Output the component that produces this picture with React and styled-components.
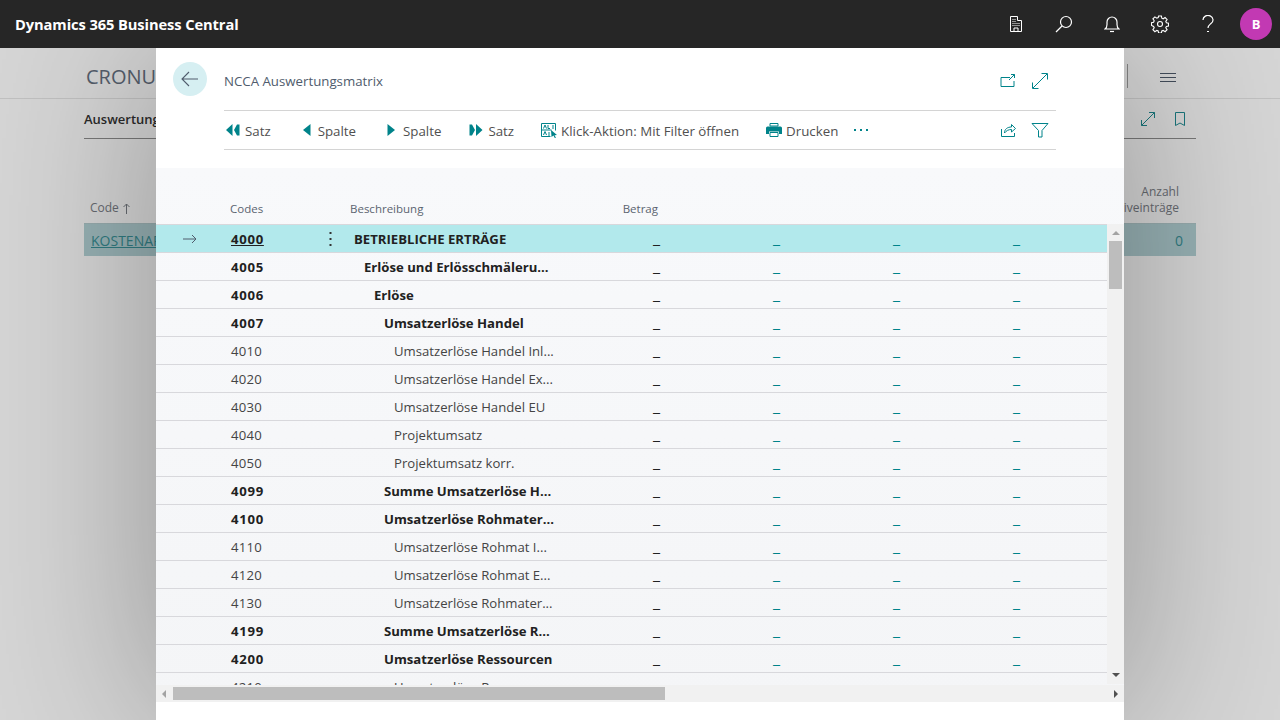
import React from 'react'
import styled, { createGlobalStyle } from 'styled-components'

const GlobalStyle = createGlobalStyle`
  html, body { margin: 0; padding: 0; height: 100%; overflow: hidden; }
  body { font-family: "Open Sans", "Noto Sans", "Liberation Sans", sans-serif; background: #fff; color: #212121; }
  * { box-sizing: border-box; }
`

const Shell = styled.div`
  position: relative;
  width: 1280px;
  height: 720px;
  overflow: hidden;
  display: flex;
  flex-direction: column;
`

const TopBar = styled.header`
  position: relative;
  z-index: 3;
  height: 48px;
  flex: none;
  background: #262626;
  display: flex;
  align-items: center;
  padding: 0 8px 0 15px;
`

const Brand = styled.div`
  color: #fff;
  font-size: 14.7px;
  font-weight: 700;
  flex: 1;
  letter-spacing: -0.1px;
`

const BarIcon = styled.span`
  width: 48px;
  height: 48px;
  display: flex;
  align-items: center;
  justify-content: center;
  color: #fff;
`

const Avatar = styled.div`
  width: 32px;
  height: 32px;
  margin-left: 8px;
  border-radius: 50%;
  background: #c239b3;
  color: #fff;
  font-size: 13px;
  font-weight: 700;
  display: flex;
  align-items: center;
  justify-content: center;
`

/* page behind the dialog */
const Page = styled.div`
  flex: 1;
  background: #fff;
`

const PageHead = styled.div`
  height: 51px;
  padding: 6px 104px 0 86px;
  border-bottom: 1px solid #e6e6e6;
  display: flex;
  align-items: center;
  justify-content: space-between;
`

const PageTitle = styled.div`
  font-size: 20px;
  color: #667181;
`

const HeadTools = styled.div`
  display: flex;
  align-items: center;
  color: #505c6d;
  height: 24px;
  border-left: 1px solid #a0a0a0;
  padding-left: 32px;
  svg { margin-top: 3px; }
`

const PageBody = styled.div`
  padding: 0 84px;
`

const PageTabs = styled.div`
  height: 40px;
  border-bottom: 1px solid #8f8f8f;
  display: flex;
  align-items: center;
  justify-content: space-between;
  font-size: 13px;
  font-weight: 600;
  color: #333;
  padding-right: 8px;
`

const PageTools = styled.div`
  display: flex;
  gap: 16px;
  color: #1f8d94;
`

const PageHeader = styled.div`
  height: 84px;
  display: flex;
  justify-content: space-between;
  align-items: flex-end;
  padding: 0 17px 7px 6px;
  font-size: 12px;
  color: #7b8087;
  line-height: 16px;
  text-align: right;
`

const SortMark = styled.span`
  display: flex;
  align-items: center;
  gap: 4px;
`

const PageRow = styled.div`
  height: 33px;
  background: #b6d5d8;
  border-top: 1px solid #b5cdd0;
  display: flex;
  align-items: center;
  justify-content: space-between;
  padding: 0 13px 0 7px;
  font-size: 14px;
  color: #3a939a;
`

const PageLink = styled.span`
  text-decoration: underline;
`

const Scrim = styled.div`
  position: absolute;
  inset: 48px 0 0 0;
  z-index: 1;
  background: rgba(0, 0, 0, 0.16);
`

/* dialog */
const Dialog = styled.section`
  position: absolute;
  z-index: 2;
  left: 156px;
  top: 48px;
  width: 968px;
  height: 672px;
  background: #fff;
  box-shadow: 0 0 170px rgba(0, 0, 0, 0.32);
  display: flex;
  flex-direction: column;
`

const DialogHead = styled.div`
  height: 120px;
  flex: none;
  display: grid;
  grid-template-columns: 68px 832px;
  grid-template-rows: 62px 40px;
`

const BackCell = styled.div`
  padding: 14px 0 0 17px;
`

const BackButton = styled.div`
  width: 34px;
  height: 34px;
  border-radius: 50%;
  background: #d6eff2;
  display: flex;
  align-items: center;
  justify-content: center;
  color: #505c6d;
`

const TitleRow = styled.div`
  display: flex;
  align-items: center;
  justify-content: space-between;
  padding: 4px 7px 0 0;
  font-size: 13.25px;
  color: #505c6d;
`

const IconGroup = styled.div`
  display: flex;
  align-items: center;
  gap: 15px;
  color: #00838a;
  line-height: 0;
`

const ToolBar = styled.div`
  grid-column: 2;
  border-top: 1px solid #d4d4d4;
  border-bottom: 1px solid #d4d4d4;
  display: flex;
  align-items: center;
  justify-content: space-between;
  padding-right: 7px;
`

const Actions = styled.div`
  display: flex;
  align-items: center;
  margin-left: 2px;
`

const Action = styled.div`
  display: flex;
  align-items: center;
  gap: ${(p) => p.$gap || 5}px;
  font-size: 13.3px;
  line-height: 18px;
  padding-top: 1px;
  margin-right: ${(p) => p.$space || 0}px;
  color: #505050;
  white-space: nowrap;
  svg { color: #00838a; flex: none; margin-top: -1px; }
`

const GridArea = styled.div`
  height: 534px;
  flex: none;
  background: linear-gradient(#f8f9fb, #f4f5f7);
  position: relative;
  display: flex;
  flex-direction: column;
`

const ColumnHead = styled.div`
  height: 57px;
  flex: none;
  display: grid;
  grid-template-columns: 74px 120px 208px 100px;
  align-items: end;
  padding-bottom: 8px;
  border-bottom: 1px solid #d8d8dc;
  margin-right: 17px;
  font-size: 11.5px;
  color: #5b6470;
`

const HeadCell = styled.div`
  grid-column: ${(p) => p.$col};
  text-align: ${(p) => p.$right ? 'right' : 'left'};
`

const Rows = styled.div`
  height: 460px;
  flex: none;
  margin-right: 17px;
  overflow: hidden;
`

const Row = styled.div`
  height: 28px;
  display: grid;
  grid-template-columns: 70px 90px 29px 211px 104px 120px 120px 120px;
  align-items: center;
  background: ${(p) => p.$active ? '#b2e9ec' : 'transparent'};
  border-bottom: 1px solid #d8d8dc;
  font-size: 13.15px;
  font-weight: ${(p) => p.$bold ? 700 : 400};
  color: ${(p) => p.$bold ? '#212121' : '#444'};
`

const Marker = styled.div`
  padding-left: 27px;
  line-height: 0;
  color: #505c6d;
`

const Code = styled.div`
  padding-left: 5px;
  letter-spacing: ${(p) => p.$bold ? '0.7px' : '0.2px'};
  text-decoration: ${(p) => p.$link ? 'underline' : 'none'};
`

const Dots = styled.div`
  display: flex;
  justify-content: center;
  color: #333;
  line-height: 0;
`

const Desc = styled.div`
  padding-left: ${(p) => 9 + p.$level * 10}px;
  white-space: nowrap;
`

const Amount = styled.div`
  text-align: right;
  font-weight: 400;
  font-size: 16px;
  line-height: 20px;
  margin-top: -2px;
  color: ${(p) => p.$dark ? '#212121' : '#00838a'};
`

const VScroll = styled.div`
  position: absolute;
  top: 56px;
  right: 0;
  width: 17px;
  height: 460px;
  background: #f1f1f1;
  display: flex;
  flex-direction: column;
  align-items: center;
  justify-content: space-between;
`

const VThumb = styled.div`
  position: absolute;
  top: 17px;
  left: 2px;
  width: 13px;
  height: 48px;
  background: #bdbdbd;
`

const HScroll = styled.div`
  height: 17px;
  flex: none;
  background: #f1f1f1;
  position: relative;
  z-index: 1;
  display: flex;
  align-items: center;
  justify-content: space-between;
  padding: 0 6px;
`

const HThumb = styled.div`
  position: absolute;
  left: 17px;
  top: 2px;
  width: 492px;
  height: 13px;
  background: #bdbdbd;
`

const Arrow = styled.span`
  width: 0;
  height: 0;
  border-style: solid;
  ${(p) => p.$dir === 'up' && 'border-width: 0 4px 4px; border-color: transparent transparent #a3a3a3; margin-top: 7px;'}
  ${(p) => p.$dir === 'down' && 'border-width: 4px 4px 0; border-color: #505050 transparent transparent; margin-bottom: 7px;'}
  ${(p) => p.$dir === 'left' && 'border-width: 4px 4px 4px 0; border-color: transparent #a3a3a3 transparent transparent;'}
  ${(p) => p.$dir === 'right' && 'border-width: 4px 0 4px 4px; border-color: transparent transparent transparent #505050;'}
`

const Line = ({ w = 16, children, vb = '0 0 16 16' }) => (
  <svg width={w} height={w} viewBox={vb} fill="none" stroke="currentColor" strokeWidth="1">
    {children}
  </svg>
)

const rows = [
  ['4000', 'BETRIEBLICHE ERTRÄGE', 0, true],
  ['4005', 'Erlöse und Erlösschmäleru...', 1, true],
  ['4006', 'Erlöse', 2, true],
  ['4007', 'Umsatzerlöse Handel', 3, true],
  ['4010', 'Umsatzerlöse Handel Inl...', 4],
  ['4020', 'Umsatzerlöse Handel Ex...', 4],
  ['4030', 'Umsatzerlöse Handel EU', 4],
  ['4040', 'Projektumsatz', 4],
  ['4050', 'Projektumsatz korr.', 4],
  ['4099', 'Summe Umsatzerlöse H...', 3, true],
  ['4100', 'Umsatzerlöse Rohmater...', 3, true],
  ['4110', 'Umsatzerlöse Rohmat I...', 4],
  ['4120', 'Umsatzerlöse Rohmat E...', 4],
  ['4130', 'Umsatzerlöse Rohmater...', 4],
  ['4199', 'Summe Umsatzerlöse R...', 3, true],
  ['4200', 'Umsatzerlöse Ressourcen', 3, true],
  ['4210', 'Umsatzerlöse Ressourcen', 4],
]

const Triangles = ({ dir, double }) => {
  const left = dir === 'left'
  return (
    <svg width={double ? 14 : 10} height="12" viewBox={double ? '0 0 14 12' : '0 0 10 12'} fill="currentColor" stroke="none">
      {double && left && <path d="M6.500 0v12L0 6zM8 6l3-5.500h2.500v11H11z" />}
      {double && !left && <path d="M7 0v12l6.500-6zM.5.500H3L6 6l-3 5.500H.5z" />}
      {!double && left && <path d="M8.500 0v12L1 6z" />}
      {!double && !left && <path d="M1.500 0v12L9 6z" />}
    </svg>
  )
}

const App = () => (
  <Shell>
    <GlobalStyle />
    <TopBar>
      <Brand>Dynamics 365 Business Central</Brand>
      <BarIcon>
        <svg width="14" height="18" viewBox="0 0 14 18" fill="none" stroke="currentColor">
          <path d="M1.500 16.500v-15h7v4h4v11z" />
          <path d="M5 16.500v-3.500h4v3.500" />
          <path d="M3.500 4.500h1M5.500 4.500h1M3.500 6.500h1M5.500 6.500h1M3.500 8.500h1M5.500 8.500h1M7.500 8.500h1M9.500 8.500h1M3.500 10.500h1M5.500 10.500h1M7.500 10.500h1M9.500 10.500h1" />
        </svg>
      </BarIcon>
      <BarIcon>
        <svg width="18" height="18" viewBox="0 0 18 18" fill="none" stroke="currentColor" strokeWidth="1.200">
          <circle cx="11" cy="7" r="5.500" />
          <path d="M7 11l-6 6" />
        </svg>
      </BarIcon>
      <BarIcon>
        <svg width="16" height="18" viewBox="0 0 16 18" fill="none" stroke="currentColor" strokeWidth="1.200">
          <path d="M1 14c1.600-1 2-2.500 2-4.500V7a5 5 0 0 1 10 0v2.500c0 2 .4 3.500 2 4.500z" />
          <path d="M6 16.500h4" />
        </svg>
      </BarIcon>
      <BarIcon>
        <svg width="18" height="18" viewBox="0 0 18 18" fill="none" stroke="currentColor" strokeWidth="1.100">
          <circle cx="9" cy="9" r="2.500" />
          <path d="M7.600 1h2.800l.4 2.200 1.400.6 1.900-1.300 2 2-1.300 1.900.6 1.400 2.100.4v2.800l-2.100.4-.6 1.400 1.300 1.900-2 2-1.900-1.300-1.400.6-.4 2.100H7.600l-.4-2.100-1.400-.6-1.900 1.300-2-2 1.300-1.900-.6-1.400L.5 10.400V7.600l2.100-.4.6-1.400-1.300-1.900 2-2 1.900 1.300 1.400-.6z" />
        </svg>
      </BarIcon>
      <BarIcon>
        <svg width="14" height="18" viewBox="0 0 14 18" fill="none" stroke="currentColor" strokeWidth="1.200">
          <path d="M2 5a5 4.500 0 1 1 8 3.500C8.500 9.800 7 10.500 7 13" />
          <path d="M6 16.500h2" />
        </svg>
      </BarIcon>
      <Avatar>B</Avatar>
    </TopBar>

    <Page>
      <PageHead>
        <PageTitle>CRONUS</PageTitle>
        <HeadTools>
          <svg width="16" height="11" viewBox="0 0 16 11" fill="none" stroke="currentColor">
            <path d="M0 1.500h16M0 5.500h16M0 9.500h16" />
          </svg>
        </HeadTools>
      </PageHead>
      <PageBody>
        <PageTabs>
          <span>Auswertung</span>
          <PageTools>
            <Line><path d="M1.500 14.500l13-13M9 1.500h5.500V7M1.500 9v5.500H7" /></Line>
            <Line><path d="M3.500 1.500h9v13l-4.500-2.500-4.500 2.500z" /></Line>
          </PageTools>
        </PageTabs>
        <PageHeader>
          <SortMark>
            Code
            <svg width="7" height="11" viewBox="0 0 7 11" fill="none" stroke="currentColor">
              <path d="M3.500 11V1M.5 4l3-3 3 3" />
            </svg>
          </SortMark>
          <span>Anzahl<br />Archiveinträge</span>
        </PageHeader>
        <PageRow>
          <PageLink>KOSTENARTEN</PageLink>
          <span>0</span>
        </PageRow>
      </PageBody>
    </Page>
    <Scrim />

    <Dialog>
      <DialogHead>
        <BackCell>
          <BackButton>
            <svg width="18" height="16" viewBox="0 0 18 16" fill="none" stroke="currentColor" strokeWidth="1.100">
              <path d="M1 8h16M8 1L1 8l7 7" />
            </svg>
          </BackButton>
        </BackCell>
        <TitleRow>
          <span>NCCA Auswertungsmatrix</span>
          <IconGroup>
            <Line><path d="M1 4.500h9M1 4.500v9h13V8M9 7l5.500-5.500M11 1.500h3.500V5" /></Line>
            <svg width="18" height="18" viewBox="0 0 18 18" fill="none" stroke="currentColor"><path d="M2 16L16 2M10.500 1.500h6v6M1.500 10.500v6h6" /></svg>
          </IconGroup>
        </TitleRow>
        <ToolBar>
          <Actions>
            <Action $space={31}><Triangles dir="left" double />Satz</Action>
            <Action $space={30} $gap={6}><Triangles dir="left" />Spalte</Action>
            <Action $space={28} $gap={7}><Triangles dir="right" />Spalte</Action>
            <Action $space={27} $gap={5}><Triangles dir="right" double />Satz</Action>
            <Action $space={27} $gap={4}>
              <svg width="16" height="16" viewBox="0 0 16 16" fill="none" stroke="currentColor">
                <path d="M.5 1.500h14v7M.5 1.500v13h9M.5 8h10" />
                <path d="M2.500 6.500l1.500-3.500 1.500 3.500M7 3v3.500h2M11 4h2M11 6h2M2.500 13l1.500-3.500 1.500 3.500M7 11h2M7 13h2" />
                <path d="M10 8l6 5-2.500.3 1.500 2.400-1.200.3-1.300-2.400L10.500 15z" fill="currentColor" stroke="none" />
              </svg>
              Klick-Aktion: Mit Filter öffnen
            </Action>
            <Action $space={15} $gap={4}>
              <svg width="16" height="14" viewBox="0 0 16 14" fill="currentColor">
                <path d="M1.500 3.500h13a1.500 1.500 0 0 1 1.500 1.500v6h-3V8.500H3V11H0V5a1.500 1.500 0 0 1 1.500-1.500z" />
                <path d="M4 .5h8v2.500H4zM4 9.500h8v4H4z" fill="#fff" stroke="currentColor" />
              </svg>
              Drucken
            </Action>
            <svg width="16" height="4" viewBox="0 0 16 4" fill="#00838a" stroke="none">
              <rect x="1" y="1" width="2" height="2" />
              <rect x="7" y="1" width="2" height="2" />
              <rect x="13" y="1" width="2" height="2" />
            </svg>
          </Actions>
          <IconGroup>
            <Line><path d="M1.500 7v7.500h13V11" /><path d="M4.500 11c0-4 3-6 7-6V2.500l4 4-4 3.500V7.500c-3 0-5 1-7 3.500z" /></Line>
            <svg width="18" height="16" viewBox="0 0 18 16" fill="none" stroke="currentColor"><path d="M1 1.500h16l-6 7v6.500H7.500V8.500z" /></svg>
          </IconGroup>
        </ToolBar>
      </DialogHead>
      <GridArea>
        <ColumnHead>
          <HeadCell $col={2}>Codes</HeadCell>
          <HeadCell $col={3}>Beschreibung</HeadCell>
          <HeadCell $col={4} $right>Betrag</HeadCell>
        </ColumnHead>
        <Rows>
          {rows.map(([code, text, level, bold], i) => (
            <Row key={code} $bold={bold} $active={i === 0}>
              <Marker>
                {i === 0 && (
                  <svg width="14" height="10" viewBox="0 0 14 10" fill="none" stroke="currentColor">
                    <path d="M0 5h13M9 1l4 4-4 4" />
                  </svg>
                )}
              </Marker>
              <Code $link={i === 0} $bold={bold}>{code}</Code>
              <Dots>
                {i === 0 && (
                  <svg width="3" height="15" viewBox="0 0 3 15" fill="currentColor" stroke="none">
                    <rect x="0.500" y="1" width="2" height="2" />
                    <rect x="0.500" y="7" width="2" height="2" />
                    <rect x="0.500" y="13" width="2" height="2" />
                  </svg>
                )}
              </Dots>
              <Desc $level={level}>{text}</Desc>
              <Amount $dark>_</Amount>
              <Amount>_</Amount>
              <Amount>_</Amount>
              <Amount>_</Amount>
            </Row>
          ))}
        </Rows>
        <VScroll>
          <Arrow $dir="up" />
          <VThumb />
          <Arrow $dir="down" />
        </VScroll>
        <HScroll>
          <Arrow $dir="left" />
          <HThumb />
          <Arrow $dir="right" />
        </HScroll>
      </GridArea>
    </Dialog>
  </Shell>
)

export default App
